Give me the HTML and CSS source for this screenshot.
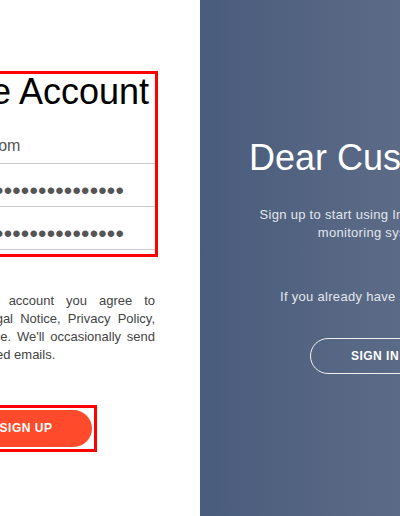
FILE: index.html
```html
<html>

<head>
  <title>Create Account</title>
  <link rel="stylesheet" href="styles.css">
</head>

<body>
  <div class="container">
    <div class="form-panel">
      <form class="signup-form highlight">
        <h1>Create Account</h1>
        <div class="field">user@mail.com</div>
        <div class="field secret">&bull;&bull;&bull;&bull;&bull;&bull;&bull;&bull;&bull;&bull;&bull;&bull;&bull;&bull;&bull;&bull;&bull;&bull;&bull;&bull;&bull;&bull;&bull;&bull;&bull;</div>
        <div class="field secret">&bull;&bull;&bull;&bull;&bull;&bull;&bull;&bull;&bull;&bull;&bull;&bull;&bull;&bull;&bull;&bull;&bull;&bull;&bull;&bull;&bull;&bull;&bull;&bull;&bull;</div>
      </form>
      <p class="terms">
        <span>By creating an account you agree to</span>
        <span>our Terms &amp; Legal Notice, Privacy Policy,</span>
        <span>and Cookie Notice. We'll occasionally send</span>
        <span class="last">you account related emails.</span>
      </p>
      <div class="btn-frame highlight">
        <button class="btn btn-primary">Sign Up</button>
      </div>
    </div>

    <div class="overlay-panel">
      <h1>Dear Customer,</h1>
      <p class="lead">Sign up to start using Intelligent Cloud monitoring system.</p>
      <p class="hint">If you already have an account,</p>
      <button class="btn btn-ghost">Sign In</button>
    </div>
  </div>
</body>

</html>
```

FILE: styles.css
```css
html, body {
  margin: 0;
  overflow: hidden;
}
body {
  font-family: "Liberation Sans", Arial, sans-serif;
  background: #fff;
}

.container {
  display: flex;
  height: 516px;
  margin-left: -148px;
}

/* left side: the form */
.form-panel {
  flex: 0 0 348px;
  box-sizing: border-box;
  padding: 74px 45px 0;
  background: #fff;
}

.highlight {
  outline: 3px solid #ff0000;
}

.signup-form {
  margin: 0;
  padding-bottom: 4px;
}

.signup-form h1 {
  margin: 0 0 11px;
  font-size: 36px;
  line-height: 36px;
  font-weight: normal;
  text-align: center;
  color: #000;
}

.field {
  height: 43px;
  box-sizing: border-box;
  padding: 15px 12px 0;
  border-bottom: 1px solid #ccc;
  font-size: 16px;
  line-height: 20px;
  color: #555;
  white-space: nowrap;
  overflow: hidden;
}
.field.secret {
  padding-top: 17px;
  font-size: 24px;
  letter-spacing: 0.2px;
}

.terms {
  margin: 38px 0 0;
  font-size: 13px;
  line-height: 18px;
  color: #444;
}
.terms span {
  display: block;
  text-align: justify;
  text-align-last: justify;
}
.terms span.last {
  text-align-last: left;
}

.btn-frame {
  width: fit-content;
  margin: 44px auto 0;
  padding: 2px;
}

.btn {
  display: block;
  margin: 0 auto;
  border-radius: 20px;
  font-family: inherit;
  font-size: 12px;
  font-weight: bold;
  letter-spacing: 0.5px;
  text-transform: uppercase;
  color: #fff;
}
.btn-primary {
  padding: 12px 40px;
  line-height: 13px;
  border: none;
  background: #ff4b2b;
}
.btn-ghost {
  margin-top: 32px;
  padding: 11px 40px;
  line-height: 12px;
  border: 1px solid #eef0f3;
  background: transparent;
}

/* right side: the greeting */
.overlay-panel {
  flex: 0 0 350px;
  padding-top: 140px;
  text-align: center;
  color: #fff;
  background: linear-gradient(to right, #4a5c7c, #68768f);
}
.overlay-panel h1 {
  margin: 0;
  font-size: 36px;
  line-height: 36px;
  font-weight: normal;
}
.overlay-panel p {
  margin: 0 auto;
  font-size: 13px;
  line-height: 18px;
  letter-spacing: 0.3px;
  color: #e2e6ec;
}
.lead {
  max-width: 250px;
  padding-top: 30px;
}
.hint {
  padding-top: 46px;
}
```
